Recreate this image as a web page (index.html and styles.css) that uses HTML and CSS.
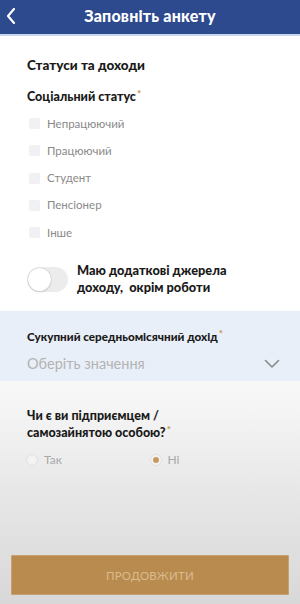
FILE: index.html
```html
<!DOCTYPE html>
<html lang="uk">
<head>
<meta charset="utf-8">
<link rel="stylesheet" href="styles.css">
</head>
<body>
<div class="screen">
  <header class="topbar">
    <svg class="back" width="12" height="18" viewBox="0 0 12 18"><path d="M9 2 L3 9 L9 16" fill="none" stroke="#fff" stroke-width="2.2" stroke-linecap="round" stroke-linejoin="round"/></svg>
    <h1 class="title">Заповніть анкету</h1>
  </header>

  <section class="block">
    <h2 class="section-title">Статуси та доходи</h2>
    <h3 class="label">Соціальний статус<span class="req">*</span></h3>
    <ul class="checks">
      <li class="check"><span class="box"></span>Непрацюючий</li>
      <li class="check"><span class="box"></span>Працюючий</li>
      <li class="check"><span class="box"></span>Студент</li>
      <li class="check"><span class="box"></span>Пенсіонер</li>
      <li class="check"><span class="box"></span>Інше</li>
    </ul>
    <div class="toggle-row">
      <span class="toggle"><span class="knob"></span></span>
      <span class="toggle-text">Маю додаткові джерела доходу,&nbsp; окрім роботи</span>
    </div>
  </section>

  <section class="income">
    <h3 class="label small">Сукупний середньомісячний дохід<span class="req">*</span></h3>
    <div class="select">
      <span class="placeholder">Оберіть значення</span>
      <svg class="chev" width="16" height="10" viewBox="0 0 16 10"><path d="M1.5 1.5 L8 8 L14.5 1.5" fill="none" stroke="#8a8a8a" stroke-width="1.6" stroke-linecap="round" stroke-linejoin="round"/></svg>
    </div>
  </section>

  <section class="block2">
    <h3 class="label q"><span class="qline">Чи є ви підприємцем /</span><span class="qline">самозайнятою особою?<span class="req">*</span></span></h3>
    <div class="radios">
      <label class="radio"><span class="circle"></span>Так</label>
      <label class="radio on"><span class="circle"><span class="dot"></span></span>Ні</label>
    </div>
  </section>

  <div class="spacer"></div>
  <div class="footer">
    <button class="btn">ПРОДОВЖИТИ</button>
  </div>
</div>
</body>
</html>
```

FILE: styles.css
```css
* { box-sizing: border-box; margin: 0; padding: 0; }
html, body { width: 300px; height: 604px; }
body {
  font-family: "Lato", "Noto Sans", sans-serif;
  background: #fff;
  overflow: hidden;
}
.screen {
  width: 300px;
  height: 604px;
  display: flex;
  flex-direction: column;
  background: linear-gradient(to bottom, #ffffff 0px, #ffffff 300px, #f6f6f6 400px, #e6e6e6 500px, #d8d8d8 604px);
}
.topbar {
  height: 36px;
  flex: none;
  background: #2d4a8e;
  border-bottom: 2px solid #c9d7ee;
  display: flex;
  align-items: center;
  justify-content: center;
  position: relative;
}
.back { position: absolute; left: 5px; top: 7px; }
.title {
  color: #fff;
  font-size: 16px;
  line-height: 20px;
  font-weight: 900;
  letter-spacing: 0.2px;
  margin-top: -2px;
}
.block { padding: 20px 27px 0; }
.section-title {
  font-size: 13.5px;
  font-weight: 900;
  color: #1a1a1a;
  line-height: 18px;
  height: 18px;
}
.label {
  font-size: 12.5px;
  font-weight: 900;
  color: #1a1a1a;
  line-height: 17px;
}
.block .label { margin-top: 14px; height: 17px; }
.req { color: #c9955a; font-size: 10px; line-height: 0; position: relative; top: -4px; margin-left: 1px; }
.checks { list-style: none; margin-top: 5px; }
.check {
  display: flex;
  align-items: center;
  height: 27.25px;
  font-size: 11.5px;
  line-height: 14px;
  color: #8a8a8a;
}
.box {
  width: 11px;
  height: 11px;
  border-radius: 2px;
  background: #f1f1f3;
  margin: 0 7px 0 2px;
}
.toggle-row {
  display: flex;
  align-items: center;
  margin-top: 16px;
  gap: 9px;
  height: 34px;
}
.toggle {
  width: 41px;
  height: 25px;
  border-radius: 13px;
  background: #ececec;
  flex: none;
  display: flex;
  align-items: center;
  padding-left: 1px;
}
.knob {
  width: 23px;
  height: 23px;
  border-radius: 50%;
  background: #fff;
  box-shadow: 0 0 1px rgba(0,0,0,0.35), 0 1px 2px rgba(0,0,0,0.12);
}
.toggle-text {
  font-size: 12.8px;
  font-weight: 900;
  color: #1a1a1a;
  line-height: 17px;
  width: 180px;
}
.income {
  flex: none;
  margin-top: 15px;
  background: #e9eff8;
  padding: 17px 27px 0;
  height: 70px;
}
.label.small { font-size: 11.7px; height: 17px; }
.select {
  display: flex;
  align-items: center;
  justify-content: space-between;
  margin-top: 9px;
  height: 20px;
}
.placeholder { font-size: 14.5px; line-height: 20px; color: #b3b3b3; }
.chev { margin-right: -7px; }
.block2 { padding: 26px 27px 0; }
.qline { display: block; height: 17px; line-height: 17px; }
.radios {
  display: flex;
  margin-top: 12px;
  margin-left: -1px;
  height: 14px;
}
.radio {
  display: flex;
  align-items: center;
  gap: 6px;
  font-size: 12px;
  line-height: 14px;
  color: #a8a8a8;
  width: 131px;
}
.circle {
  width: 12px;
  height: 12px;
  border-radius: 50%;
  border: 1px solid #e0e0e0;
  background: #f3f3f3;
  display: flex;
  align-items: center;
  justify-content: center;
}
.dot { width: 6px; height: 6px; border-radius: 50%; background: #c59a60; }
.spacer { flex: 1; }
.footer { padding: 0 11px 9px; }
.btn {
  display: block;
  width: 100%;
  height: 40px;
  border: 1px solid #c6a070;
  background: #b98b4f;
  color: #d9bb8d;
  font-family: "Lato", "Noto Sans", sans-serif;
  font-size: 11.5px;
  letter-spacing: 0.2px;
  border-radius: 1px;
}
```
